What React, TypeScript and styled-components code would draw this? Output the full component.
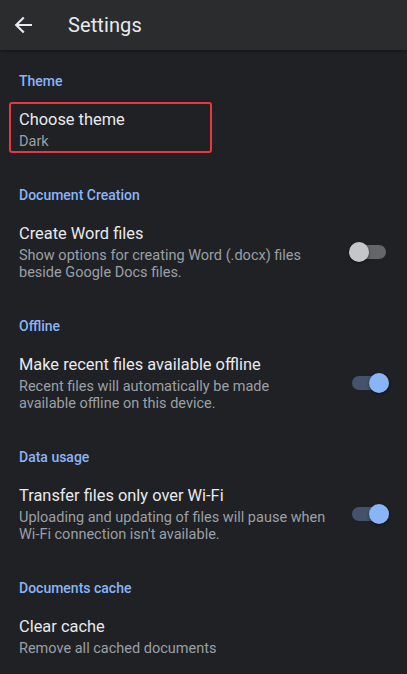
import React from 'react'
import styled, { createGlobalStyle } from 'styled-components'

const GlobalStyle = createGlobalStyle`
    html, body {
        margin: 0;
        padding: 0;
        background: #202124;
    }
    body {
        font-family: Roboto, 'Noto Sans', Arial, sans-serif;
        -webkit-font-smoothing: antialiased;
    }
`

const Screen = styled.div`
    width: 407px;
    min-height: 674px;
    background: #202124;
    overflow: hidden;
`

const TopBar = styled.header`
    display: flex;
    align-items: center;
    height: 50px;
    padding-left: 14px;
    background: #2b2c2e;
    box-shadow: 0 1px 3px rgba(0, 0, 0, 0.45);
    position: relative;
    z-index: 1;
`

const BackButton = styled.button`
    display: flex;
    align-items: center;
    justify-content: center;
    width: 18px;
    height: 18px;
    padding: 0;
    border: 0;
    background: none;
    color: #e8eaed;
    margin-right: 36px;
`

const Title = styled.h1`
    margin: 0;
    font-size: 20px;
    font-weight: 400;
    color: #e8eaed;
    letter-spacing: 0.1px;
`

const Section = styled.section`
    padding: 21px 0 0 19px;
    & + & {
        padding-top: 35px;
    }
`

const SectionLabel = styled.h2`
    margin: 0 0 18px;
    font-size: 14px;
    line-height: 20px;
    font-weight: 500;
    color: #8ab4f8;
`

const Row = styled.div`
    display: flex;
    align-items: center;
    padding-right: 21px;
`

const RowText = styled.div<{ $highlight?: boolean }>`
    flex: 1;
    position: relative;
    padding-right: 12px;
    ${(p) =>
        p.$highlight &&
        `
        &::after {
            content: '';
            position: absolute;
            left: -10px;
            top: -7px;
            width: 199px;
            height: 47px;
            border: 2px solid #e8383d;
            border-radius: 3px;
            pointer-events: none;
        }
    `}
`

const ItemTitle = styled.div`
    font-size: 16.4px;
    line-height: 22px;
    color: #e8eaed;
    margin-bottom: 2px;
`

const ItemSubtitle = styled.div`
    font-size: 14.5px;
    line-height: 17px;
    color: #9aa0a6;
`

const Track = styled.div<{ $on: boolean }>`
    position: relative;
    flex-shrink: 0;
    width: 34px;
    height: 14px;
    border-radius: 7px;
    background: ${(p) => (p.$on ? '#44526b' : '#656669')};
`

const Thumb = styled.div<{ $on: boolean }>`
    position: absolute;
    top: -3px;
    left: ${(p) => (p.$on ? '17px' : '-3px')};
    width: 20px;
    height: 20px;
    border-radius: 50%;
    background: ${(p) => (p.$on ? '#8ab4f8' : '#c4c6c9')};
    box-shadow: 0 1px 3px rgba(0, 0, 0, 0.5);
`

const Switch: React.FC<{ on: boolean }> = ({ on }) => (
    <Track $on={on}>
        <Thumb $on={on} />
    </Track>
)

type Item = {
    title: string
    subtitle: string[]
    toggle?: boolean
    highlight?: boolean
}

const sections: { label: string; items: Item[] }[] = [
    {
        label: 'Theme',
        items: [{ title: 'Choose theme', subtitle: ['Dark'], highlight: true }],
    },
    {
        label: 'Document Creation',
        items: [
            {
                title: 'Create Word files',
                subtitle: ['Show options for creating Word (.docx) files', 'beside Google Docs files.'],
                toggle: false,
            },
        ],
    },
    {
        label: 'Offline',
        items: [
            {
                title: 'Make recent files available offline',
                subtitle: ['Recent files will automatically be made', 'available offline on this device.'],
                toggle: true,
            },
        ],
    },
    {
        label: 'Data usage',
        items: [
            {
                title: 'Transfer files only over Wi-Fi',
                subtitle: ['Uploading and updating of files will pause when', "Wi-Fi connection isn't available."],
                toggle: true,
            },
        ],
    },
    {
        label: 'Documents cache',
        items: [{ title: 'Clear cache', subtitle: ['Remove all cached documents'] }],
    },
]

const App: React.FC = () => {
    return (
        <Screen>
            <GlobalStyle />
            <TopBar>
                <BackButton aria-label="Back">
                    <svg width="18" height="18" viewBox="0 0 18 18" fill="none">
                        <path
                            d="M17 9H2.5M9 2.2L2.2 9 9 15.8"
                            stroke="currentColor"
                            strokeWidth="2.2"
                            strokeLinecap="square"
                        />
                    </svg>
                </BackButton>
                <Title>Settings</Title>
            </TopBar>

            {sections.map((s) => (
                <Section key={s.label}>
                    <SectionLabel>{s.label}</SectionLabel>
                    {s.items.map((it) => (
                        <Row key={it.title}>
                            <RowText $highlight={it.highlight}>
                                <ItemTitle>{it.title}</ItemTitle>
                                {it.subtitle.map((line) => (
                                    <ItemSubtitle key={line}>{line}</ItemSubtitle>
                                ))}
                            </RowText>
                            {it.toggle !== undefined && <Switch on={it.toggle} />}
                        </Row>
                    ))}
                </Section>
            ))}
        </Screen>
    )
}

export default App
